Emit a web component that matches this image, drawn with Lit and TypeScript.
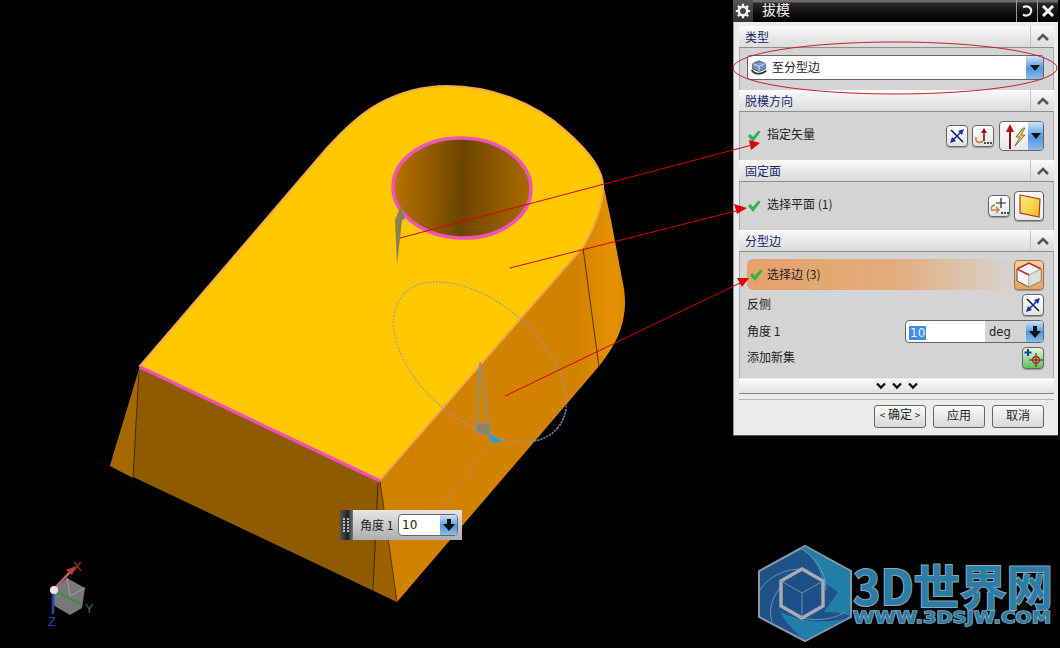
import { LitElement, html, css, svg } from "lit";
import { customElement } from "lit/decorators.js";

const model = svg`
<svg class="layer" viewBox="0 0 1060 648" width="1060" height="648">
  <defs>
    <linearGradient id="hole" x1="0" x2="1" y1="0" y2="0">
      <stop offset="0" stop-color="#b87200"/><stop offset=".25" stop-color="#955c00"/>
      <stop offset=".5" stop-color="#6c4400"/><stop offset=".75" stop-color="#8c5800"/><stop offset="1" stop-color="#ac6a00"/>
    </linearGradient>
    <linearGradient id="rf" x1="0" x2="1" y1="0" y2="0">
      <stop offset="0" stop-color="#d18000"/><stop offset=".8" stop-color="#d38200"/><stop offset=".95" stop-color="#e59100"/><stop offset="1" stop-color="#dc8a00"/>
    </linearGradient>
  </defs>
  <!-- left face -->
  <polygon points="140,366 380,480 397,602 110,466" fill="#8f5a00"/>
  <polygon points="140,366 133,478 110,466" fill="#a56800"/>
  <polygon points="380,480 397,602 373,590" fill="#9c6200"/>
  <line x1="139" y1="370" x2="133" y2="478" stroke="#3a2800" stroke-width=".9"/>
  <line x1="378" y1="483" x2="373" y2="590" stroke="#3a2800" stroke-width=".9"/>
  <!-- right face -->
  <path d="M380 480 L397 602 L600 365 C612 349 621 335 624 315 C626 303 625 292 622 278 L611 220 L602 178 L583 240 Z" fill="url(#rf)"/>
  <line x1="583" y1="248" x2="599" y2="367" stroke="#4a3000" stroke-width=".9"/>
  <line x1="380" y1="481" x2="397" y2="602" stroke="#4a3000" stroke-width=".8"/>
  <!-- top face -->
  <path d="M140 366 L327 148 C345 128 360 114 378 104 C402 91 425 86 447 86 C490 86 535 102 566 131 C590 152 603 170 603 186 C603 205 594 228 583 247 L380 480 Z"
    fill="#ffc800" stroke="#f0a850" stroke-width="2"/>
  <line x1="140" y1="367" x2="380" y2="481" stroke="#f050b4" stroke-width="3.2"/>
  <ellipse cx="462" cy="188" rx="69" ry="50" transform="rotate(2 462 188)" fill="url(#hole)" stroke="#ee55b4" stroke-width="3.6"/>
  <!-- draft vector -->
  <polygon points="401,205 405,219 402,220 397,265 395,220" fill="#8a8050"/>
  <!-- angle handle -->
  <g fill="none">
    <ellipse cx="480" cy="362" rx="102" ry="59" transform="rotate(40.5 480 362)" stroke="#9a9a9a" stroke-width="1.3" stroke-dasharray="1.6 1.6"/>
    <path d="M566 410 C562 428 548 440 530 442" stroke="#3f8fe0" stroke-width="1.2" stroke-dasharray="1.6 1.6"/>
    <path d="M490 443 L440 511" stroke="#a88a55" stroke-width="1"/>
    <path d="M480 362 L476 432 M480 362 L490 435" stroke="#7e93a0" stroke-width="1.4"/>
  </g>
  <polygon points="477,422 490,425 490,436 476,432" fill="#8b8463" stroke="#7e93a0"/>
  <polygon points="489,434 504,442 490,442" fill="#1ea0e8"/>
  <!-- triad -->
  <polygon points="67,578 85,588 82,608 70,615 53,605 53,590" fill="#a0a0a0" opacity=".75"/>
  <polyline points="67,578 70,596 85,588" fill="none" stroke="#b0b0b0" stroke-width=".7"/>
  <line x1="53" y1="590" x2="71" y2="571" stroke="#c06868" stroke-width="2.4"/>
  <polygon points="76,566 66,570 72,575" fill="#c43434"/>
  <line x1="55" y1="591" x2="81" y2="604" stroke="#2e9442" stroke-width="2.4"/>
  <line x1="53" y1="592" x2="53" y2="614" stroke="#1e44b8" stroke-width="2.6"/>
  <circle cx="54" cy="590" r="4" fill="#e8e8e8"/>
  <text x="73" y="571" class="axis" fill="#b23a3a">X</text>
  <text x="85" y="613" class="axis" fill="#2a7a3a">Y</text>
  <text x="48" y="626" class="axis" fill="#1e44b8">Z</text>
  <!-- watermark -->
  <g>
    <polygon points="805,546 851,571 851,617 805,641 759,617 759,571" fill="#1f5289" stroke="#8698a8" stroke-width="2"/>
    <path d="M800 548 C815 556 822 575 822 581 L838 592 L824 612 C838 612 846 614 850 616 L850 572 L806 547 Z" fill="#1f7fa6"/>
    <path d="M780 612 C790 630 805 640 805 640 L850 617 C835 622 810 625 780 612 Z" fill="#1f7fa6"/>
    <path d="M760 590 C768 576 790 566 808 570 M800 548 C815 556 826 572 826 590 M845 612 C830 622 800 624 782 606 M772 622 C768 610 772 596 782 586" fill="none" stroke="#7f9fb8" stroke-width=".8"/>
    <polygon points="802,569 823,581 823,606 802,618 781,606 781,581" fill="#1d4f88" stroke="#a7adb2" stroke-width="3.4"/>
    <path d="M781 581 L802 593 L823 581 M802 593 V618" fill="none" stroke="#6f8ea8" stroke-width="1"/>
    <text class="wm" x="853" y="605" textLength="200" lengthAdjust="spacingAndGlyphs">3D世界网</text>
    <text class="wm2" x="853" y="623" textLength="198" lengthAdjust="spacingAndGlyphs">WWW.3DSJW.COM</text>
  </g>
</svg>`;

const marks = svg`
<svg class="layer top" viewBox="0 0 1060 648" width="1060" height="648">
  <ellipse cx="895" cy="68" rx="162" ry="26" fill="none" stroke="#c8202c" stroke-width="1"/>
  <g stroke="#d80000" stroke-width="1" fill="#e00000">
    <line x1="400" y1="238" x2="752" y2="145"/>
    <line x1="510" y1="268" x2="740" y2="210"/>
    <line x1="505" y1="396" x2="742" y2="282"/>
    <polygon points="760,143 749,140 751,150" stroke="none"/>
    <polygon points="747,208 734,204 737,214" stroke="none"/>
    <polygon points="749,278 737,278 742,287" stroke="none"/>
  </g>
</svg>`;

const flip = svg`<svg viewBox="0 0 20 20" width="20" height="20"><path d="M4 4 L16 16" stroke="#111" stroke-width="1.4"/><path d="M17 3 L11 5 L15 9 Z M3 17 L9 15 L5 11 Z" fill="#1530b0"/><path d="M15 5 L5 15" stroke="#1530b0" stroke-width="1.6"/></svg>`;
const orient = svg`<svg viewBox="0 0 20 20" width="20" height="20"><path d="M11 15 V5" stroke="#7a1010" stroke-width="1.6"/><path d="M11 2 L8 7 H14 Z" fill="#a01010"/><path d="M3 11 C2 16 6 18 10 15" fill="none" stroke="#e07820" stroke-width="1.6"/><circle cx="12" cy="17" r=".9"/><circle cx="15" cy="17" r=".9"/><circle cx="18" cy="17" r=".9"/></svg>`;
const vector = svg`<svg viewBox="0 0 28 28" width="28" height="28"><path d="M10 27 V8" stroke="#8a1414" stroke-width="2"/><path d="M10 2 L6 10 H14 Z" fill="#a81818"/><path d="M23 6 L16 15 H20 L15 24 L25 13 H21 L25 6 Z" fill="#e8d040" stroke="#555" stroke-width=".8"/></svg>`;
const addFace = svg`<svg viewBox="0 0 20 20" width="20" height="20"><path d="M12 2 V12 M7 7 H17" stroke="#222" stroke-width="1.2"/><path d="M2 13 C3 9 5 9 6 9 M2 14 H10 M7 11 L10 14 L7 17" fill="none" stroke="#e07820" stroke-width="1.3"/><circle cx="13" cy="17" r=".9"/><circle cx="16" cy="17" r=".9"/><circle cx="19" cy="17" r=".9"/></svg>`;
const face = svg`<svg viewBox="0 0 28 28" width="28" height="28"><defs><linearGradient id="fy" x1="0" y1="0" x2="1" y2="1"><stop offset="0" stop-color="#fff080"/><stop offset="1" stop-color="#f0b828"/></linearGradient></defs><polygon points="5,3 25,7 24,25 5,21" fill="url(#fy)" stroke="#b03a14" stroke-width="1.2"/></svg>`;
const cube = svg`<svg viewBox="0 0 28 28" width="28" height="28"><polygon points="14,2 26,8 26,20 14,26 2,20 2,8" fill="#f4f4f4" stroke="#555" stroke-width="1"/><path d="M2 8 L14 14 L26 8 M14 14 V26" fill="none" stroke="#888" stroke-width="1"/><path d="M2 8 L14 2 L26 8 M2 8 L14 14" fill="none" stroke="#c03a20" stroke-width="1.5"/><polygon points="14,14 26,8 26,20 14,26" fill="#d4d4d4" opacity=".7"/></svg>`;
const addSet = svg`<svg viewBox="0 0 20 20" width="20" height="20"><path d="M13 5 V19 M6 12 H20" stroke="#222" stroke-width="1"/><circle cx="13" cy="12" r="3.4" fill="none" stroke="#d02010" stroke-width="1.6"/><path d="M5 1 V8 M1.5 4.5 H8.5" stroke="#1040b0" stroke-width="2"/></svg>`;
const typeIcon = svg`<svg viewBox="0 0 20 20" width="18" height="18"><polygon points="10,2 17,5 17,11 10,14 3,11 3,5" fill="#6f96c8" stroke="#333" stroke-width=".8"/><path d="M3 5 L10 8 L17 5 M10 8 V14" fill="none" stroke="#e6eefa" stroke-width=".9"/><path d="M2 12 C4 17 13 18 18 13" fill="none" stroke="#333" stroke-width="2"/></svg>`;
const check = svg`<svg viewBox="0 0 14 14" width="14" height="14"><path d="M1 7 L3.5 5 L5.8 8 L11.5 1.5 L13.5 3 L6 13 Z" fill="#2cb34a"/></svg>`;
const chev = svg`<svg viewBox="0 0 14 10" width="14" height="10"><path d="M2 8 L7 3 L12 8" fill="none" stroke="#555" stroke-width="2.6"/></svg>`;
const chevD = svg`<svg viewBox="0 0 12 8" width="12" height="8"><path d="M2 1.5 L6 5.5 L10 1.5" fill="none" stroke="#111" stroke-width="2.4"/></svg>`;
const tri = svg`<svg viewBox="0 0 10 6" width="10" height="6"><path d="M0 0 H10 L5 6 Z" fill="#111"/></svg>`;
const down = svg`<svg viewBox="0 0 12 12" width="12" height="12"><path d="M4 0 H8 V5 H12 L6 12 L0 5 H4 Z" fill="#111"/></svg>`;
const gear = svg`<svg viewBox="0 0 16 16" width="16" height="16"><circle cx="8" cy="8" r="4.2" fill="none" stroke="#f2f2f2" stroke-width="2.6"/><path d="M8 .8 V3.5 M8 12.5 V15.2 M.8 8 H3.5 M12.5 8 H15.2 M2.9 2.9 L4.8 4.8 M11.2 11.2 L13.1 13.1 M13.1 2.9 L11.2 4.8 M4.8 11.2 L2.9 13.1" stroke="#f2f2f2" stroke-width="2.2"/></svg>`;
const undo = svg`<svg viewBox="0 0 14 14" width="14" height="14"><path d="M3 3.2 C8 1 12 4 11 8 C10 11.5 6 12.5 3 10.5" fill="none" stroke="#eee" stroke-width="2.2"/></svg>`;
const closeX = svg`<svg viewBox="0 0 14 14" width="14" height="14"><path d="M2 2 L12 12 M12 2 L2 12" stroke="#f4f4f4" stroke-width="3"/></svg>`;

@customElement("app-root")
export class AppRoot extends LitElement {
  static styles = css`
    :host { display: block; width: 1060px; height: 648px; }
    .stage { position: relative; width: 1060px; height: 648px; background: #000; overflow: hidden;
      font-family: "Noto Sans CJK SC", "Liberation Sans", sans-serif; font-size: 12px; color: #222; }
    .layer { position: absolute; left: 0; top: 0; display: block; }
    .top { pointer-events: none; }
    .axis { font: 13px "Liberation Sans", sans-serif; }
    .wm { font: 700 48px "Noto Sans CJK SC", sans-serif; fill: #2a7ea6; stroke: #8ea6b6; stroke-width: 2; paint-order: stroke; }
    .wm2 { font: 700 15px "DejaVu Sans", sans-serif; fill: #2a7ea6; stroke: #8ea6b6; stroke-width: 1.4; paint-order: stroke; }

    .dialog { position: absolute; left: 733px; top: 0; width: 325px; height: 436px; background: #ececec;
      box-shadow: inset 1px 0 #9a9a9a; box-sizing: border-box; display: flex; flex-direction: column; }
    .title { height: 22px; flex: none; display: flex; align-items: center; color: #f4f4f4; box-sizing: border-box;
      background: linear-gradient(#6c6c6c 0, #6c6c6c 2px, #2a2a2a 3px, #0c0c0c 14px, #000 100%); }
    .tbtn { width: 20px; height: 100%; display: flex; align-items: center; justify-content: center; flex: none; }
    .tbtn.g { background: linear-gradient(#555, #333); }
    .tname { flex: 1; padding: 0 0 4px 9px; box-sizing: border-box; font-size: 14px; line-height: 18px; }
    .tbtn.sep { border-left: 1px solid #999; width: 20px; }

    .sections { flex: none; padding: 4px 4px 0 6px; display: flex; flex-direction: column; }
    .head { height: 22px; box-sizing: border-box; display: flex; align-items: center; padding-left: 6px; color: #16246a; line-height: 1;
      background: linear-gradient(#fbfbfb, #e6e6e6 60%, #dcdcdc); border-bottom: 1px solid #8f8f8f; }
    .head span { flex: 1; }
    .head i { width: 23px; height: 21px; display: flex; align-items: center; justify-content: center; border-left: 1px solid #c4c4c4; }
    .body { background: #d4d4d4; box-sizing: border-box; border-left: 1px solid #a8a8a8; border-right: 1px solid #a8a8a8; padding: 0 9px 0 7px; }
    .b1 { height: 42px; padding-top: 7px; }
    .b2 { height: 48px; display: flex; align-items: center; padding-bottom: 1px; }
    .b4 { height: 126px; padding-top: 7px; display: flex; flex-direction: column; }

    .combo { height: 25px; box-sizing: border-box; display: flex; align-items: center; background: #fff; border: 1px solid #666; border-radius: 3px; }
    .combo svg { margin: 0 4px 0 2px; }
    .combo .drop svg { margin: 0; }
    .combo span { flex: 1; margin-bottom: 2px; }
    .drop { width: 17px; align-self: stretch; display: flex; align-items: center; justify-content: center; flex: none;
      background: linear-gradient(#cfe3f6, #4f98e0 55%, #8bbce8); border-radius: 0 2px 2px 0; }

    .row { display: flex; align-items: center; gap: 4px; }
    .grow { flex: 1; margin-bottom: 4px; }
    .sel .grow { margin-bottom: 2px; }
    .b2 .grow { margin-left: 2px; }
    .ic { width: 22px; height: 22px; box-sizing: border-box; display: flex; align-items: center; justify-content: center; border: 1px solid #666;
      border-radius: 4px; background: linear-gradient(#fff, #dfe4ea); flex: none; box-shadow: 0 1px 1px #999; }
    .ic.big { width: 30px; height: 30px; background: linear-gradient(#fff, #e8e8e8); }
    .ic.green { background: linear-gradient(#e4f6d8, #62c060); }
    .ic.act { background: linear-gradient(#f7cda6, #ee9f60); border-color: #b0703a; }
    .split { width: 45px; height: 30px; box-sizing: border-box; margin-left: 1px; border: 1px solid #666; border-radius: 4px; overflow: hidden; display: flex; background: linear-gradient(#fff, #e6e6e6); }
    .split .l { flex: 1; display: flex; align-items: center; justify-content: center; }
    .split .drop { width: 16px; }

    .sel { height: 31px; flex: none; padding-left: 2px; border-radius: 6px; display: flex; align-items: center; gap: 4px;
      background: linear-gradient(90deg, #e5a26a, #e3ac7c 50%, #d8d2cc 88%, #d4d4d4); }
    .sel .ic { margin: 0; }
    .form { display: grid; grid-template-columns: 1fr 139px; row-gap: 4px; align-items: center; margin-top: 4px; }
    .form > span { line-height: 1; margin-bottom: 2px; }
    .form .ic { justify-self: end; }
    .form .lf { grid-column: 1; }
    .spin { height: 23px; box-sizing: border-box; display: flex; align-items: center; border: 1px solid #666; border-radius: 4px; background: #fff; overflow: hidden; }
    .spin .v { width: 79px; padding-left: 3px; box-sizing: border-box; }
    .spin mark { background: #3f8fe4; color: #e8f2ff; padding: 0 1px; font-family: "DejaVu Sans", sans-serif; }
    .spin .u { flex: 1; align-self: stretch; display: flex; align-items: center; padding-left: 4px; background: #d4d4d4; font-family: "DejaVu Sans", sans-serif; font-size: 11.5px; }

    .more { height: 14px; margin-top: 1px; display: flex; gap: 4px; align-items: center; justify-content: center; background: linear-gradient(#fbfbfb, #e2e2e2); border-bottom: 1px solid #888; }
    .actions { margin: 5px 4px 0 6px; padding: 5px 10px 0 0; border-top: 1px solid #b8b8b8; display: flex; justify-content: flex-end; gap: 7px; }
    .actions button { width: 52px; height: 23px; box-sizing: border-box; padding: 0 0 4px; border: 1px solid #666; border-radius: 3px; font: inherit; line-height: 16px; color: #222;
      background: linear-gradient(#fafafa, #d8d8d8); }
    .actions button span { font-size: 10px; }
    .edge { position: absolute; left: 0; right: 0; bottom: 0; height: 1px; background: #555; }

    .float { position: absolute; left: 340px; top: 510px; width: 122px; height: 30px; display: flex; align-items: center;
      background: linear-gradient(#e6e6e6, #aeaeae); }
    .grip { width: 13px; height: 100%; flex: none; background: linear-gradient(90deg, #555, #222 60%, #777); display: grid; grid-template-columns: 3px 3px; gap: 1px 1px; align-content: center; justify-content: center; padding: 0; }
    .grip b { width: 2px; height: 2px; background: #bbb; }
    .float .lbl { margin: 0 0 2px 7px; width: 38px; white-space: nowrap; }
    .fin { width: 60px; height: 22px; box-sizing: border-box; display: flex; align-items: center; background: #fff; border: 1px solid #666; border-radius: 4px; overflow: hidden; }
    .fin span { flex: 1; padding-left: 3px; font-family: "DejaVu Sans", sans-serif; }
  `;

  render() {
    return html`<div class="stage">
      ${model}
      <div class="dialog">
        <div class="title">
          <div class="tbtn g">${gear}</div>
          <div class="tname">拔模</div>
          <div class="tbtn sep">${undo}</div>
          <div class="tbtn sep">${closeX}</div>
        </div>
        <div class="sections">
          <div class="head"><span>类型</span><i>${chev}</i></div>
          <div class="body b1">
            <div class="combo">${typeIcon}<span>至分型边</span><div class="drop">${tri}</div></div>
          </div>
          <div class="head"><span>脱模方向</span><i>${chev}</i></div>
          <div class="body b2 row">
            ${check}<span class="grow">指定矢量</span>
            <div class="ic">${flip}</div><div class="ic">${orient}</div>
            <div class="split"><div class="l">${vector}</div><div class="drop">${tri}</div></div>
          </div>
          <div class="head"><span>固定面</span><i>${chev}</i></div>
          <div class="body b2 row">
            ${check}<span class="grow">选择平面 (1)</span>
            <div class="ic">${addFace}</div><div class="ic big">${face}</div>
          </div>
          <div class="head"><span>分型边</span><i>${chev}</i></div>
          <div class="body b4">
            <div class="sel">${check}<span class="grow">选择边 (3)</span><div class="ic big act">${cube}</div></div>
            <div class="form">
              <span class="lf">反侧</span><div class="ic">${flip}</div>
              <span class="lf">角度 1</span>
              <div class="spin"><div class="v"><mark>10</mark></div><div class="u">deg</div><div class="drop">${down}</div></div>
              <span class="lf">添加新集</span><div class="ic green">${addSet}</div>
            </div>
          </div>
          <div class="more">${chevD}${chevD}${chevD}</div>
        </div>
        <div class="actions">
          <button><span>&lt;</span> 确定 <span>&gt;</span></button>
          <button>应用</button>
          <button>取消</button>
        </div>
        <div class="edge"></div>
      </div>
      <div class="float">
        <div class="grip">${Array.from({ length: 10 }, () => html`<b></b>`)}</div>
        <span class="lbl">角度 1</span>
        <div class="fin"><span>10</span><div class="drop">${down}</div></div>
      </div>
      ${marks}
    </div>`;
  }
}
